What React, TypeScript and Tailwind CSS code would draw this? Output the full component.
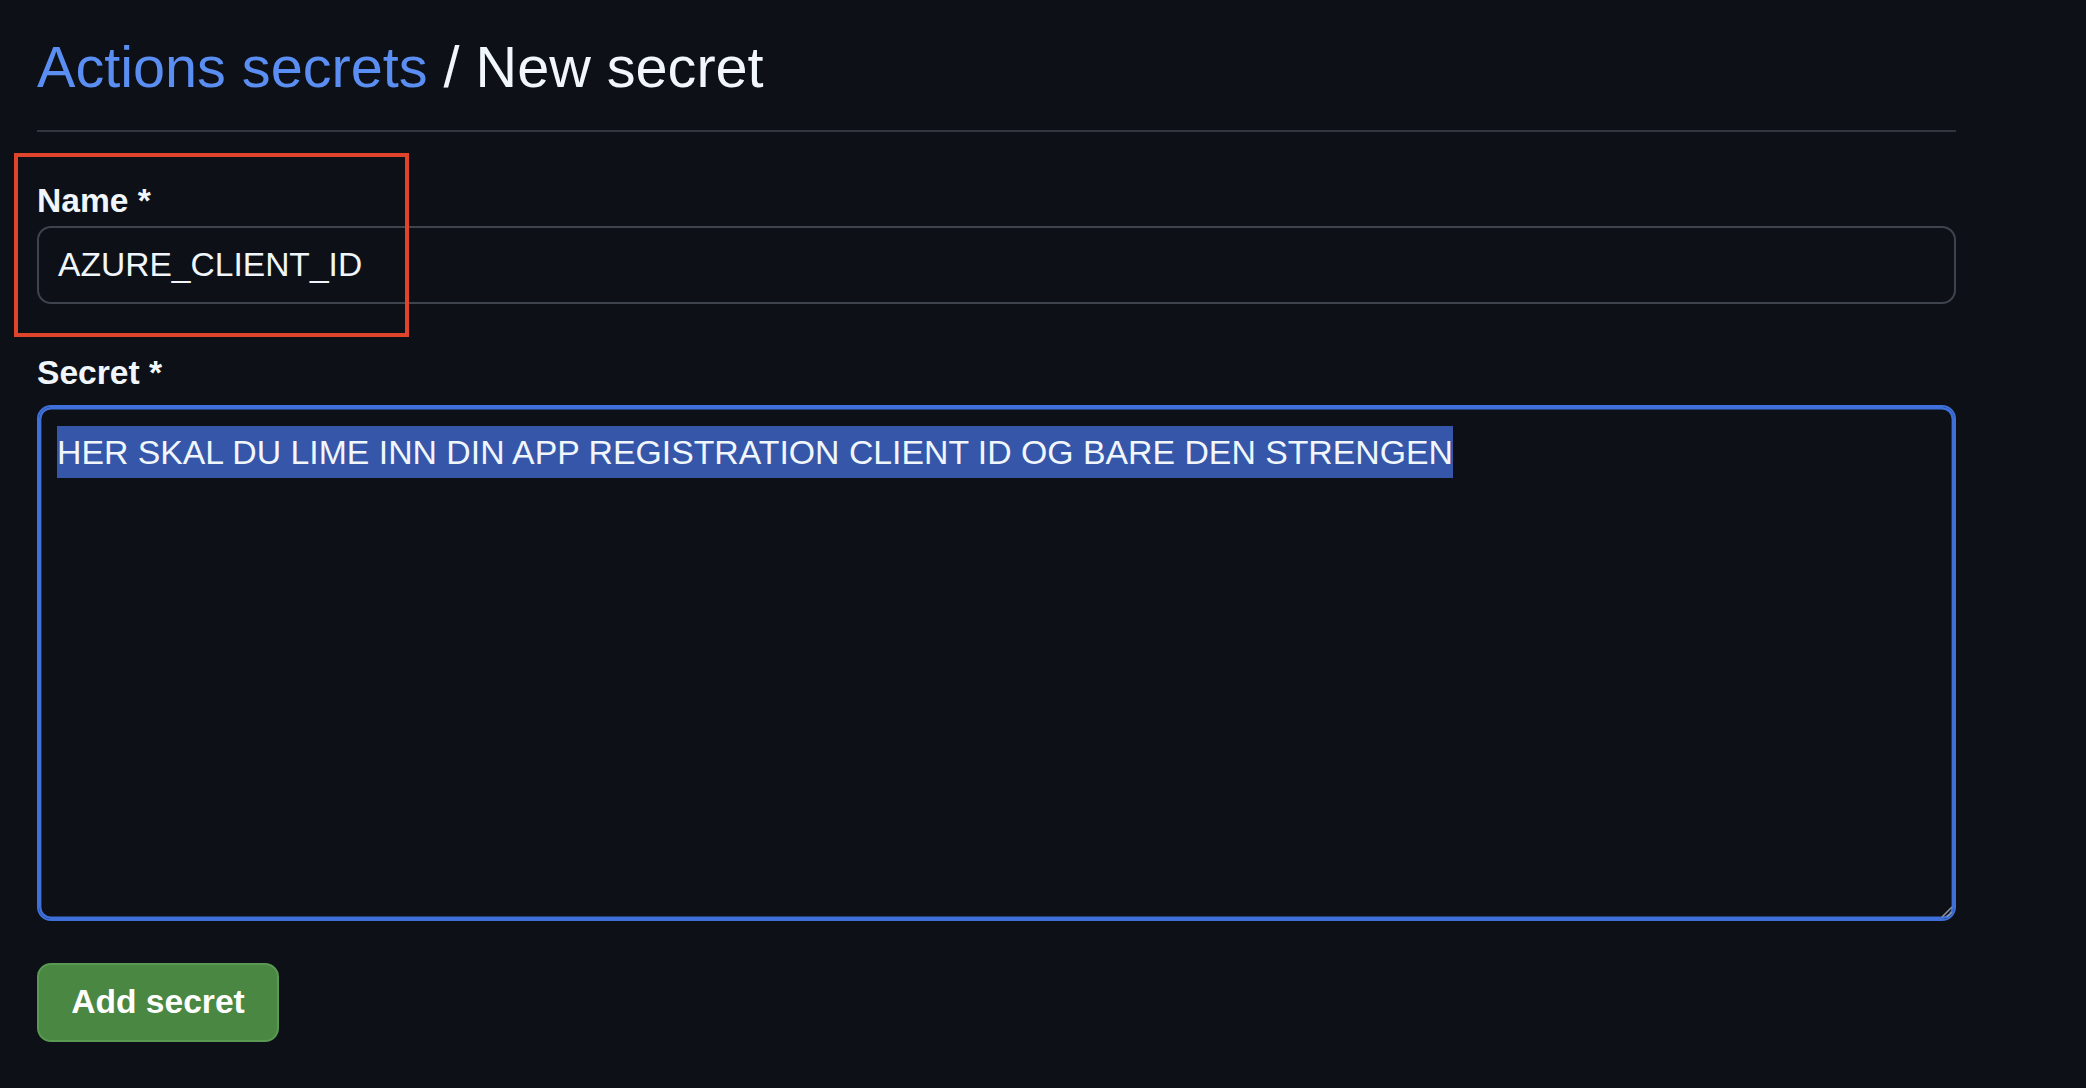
import React from "react";

export default function App() {
	return (
		<div className="relative min-h-[1088px] w-full bg-[#0d1117] font-['Liberation_Sans',Arial,sans-serif] text-[#f0f6fc]">
			<div className="ml-[37px] w-[1919px] pt-[31px]">
				<h1 className="border-b-[2.4px] border-[#30363d] pb-[27px] text-[57.6px] font-normal leading-[72px]">
					<a href="#" className="text-[#5b8ef2]">
						Actions secrets
					</a>{" "}
					<span className="text-[#f0f6fc]">/ New secret</span>
				</h1>

				<label className="mt-[44px] block text-[33.6px] font-bold leading-[50px]">
					Name *
				</label>
				<div className="flex h-[78px] items-center rounded-[14px] border-[2.4px] border-[#3d444d] px-[19px] text-[33.6px]">
					AZURE_CLIENT_ID
				</div>

				<label className="mt-[44px] block text-[33.6px] font-bold leading-[50px]">
					Secret *
				</label>
				<div className="relative mt-[7px] h-[515.5px] rounded-[14px] border-[2.4px] border-[#3f6fd8] pl-[18px] pt-[19px] shadow-[inset_0_0_0_2.4px_#3f6fd8]">
					<div className="text-[33.8px] leading-[52px]">
						<span className="inline-block bg-[#3656a9] text-[#f0f6fc]">
							HER SKAL DU LIME INN DIN APP REGISTRATION CLIENT ID OG BARE DEN STRENGEN
						</span>
					</div>
					<svg
						className="absolute bottom-[1px] right-[1px]"
						width="14"
						height="14"
						viewBox="0 0 14 14"
					>
						<line x1="3" y1="13" x2="13" y2="3" stroke="#8b949e" strokeWidth="1.6" />
						<line x1="8" y1="13" x2="13" y2="8" stroke="#8b949e" strokeWidth="1.6" />
					</svg>
				</div>

				<button className="mt-[42px] flex h-[79px] w-[242px] items-center justify-center rounded-[14px] border-[2.4px] border-[#5a9951] bg-[#4a8742] text-[33.6px] font-bold text-white">
					Add secret
				</button>
			</div>

			{/* annotation box */}
			<div className="absolute left-[14px] top-[153px] h-[184px] w-[395px] border-[4px] border-[#e0442a]" />
		</div>
	);
}
